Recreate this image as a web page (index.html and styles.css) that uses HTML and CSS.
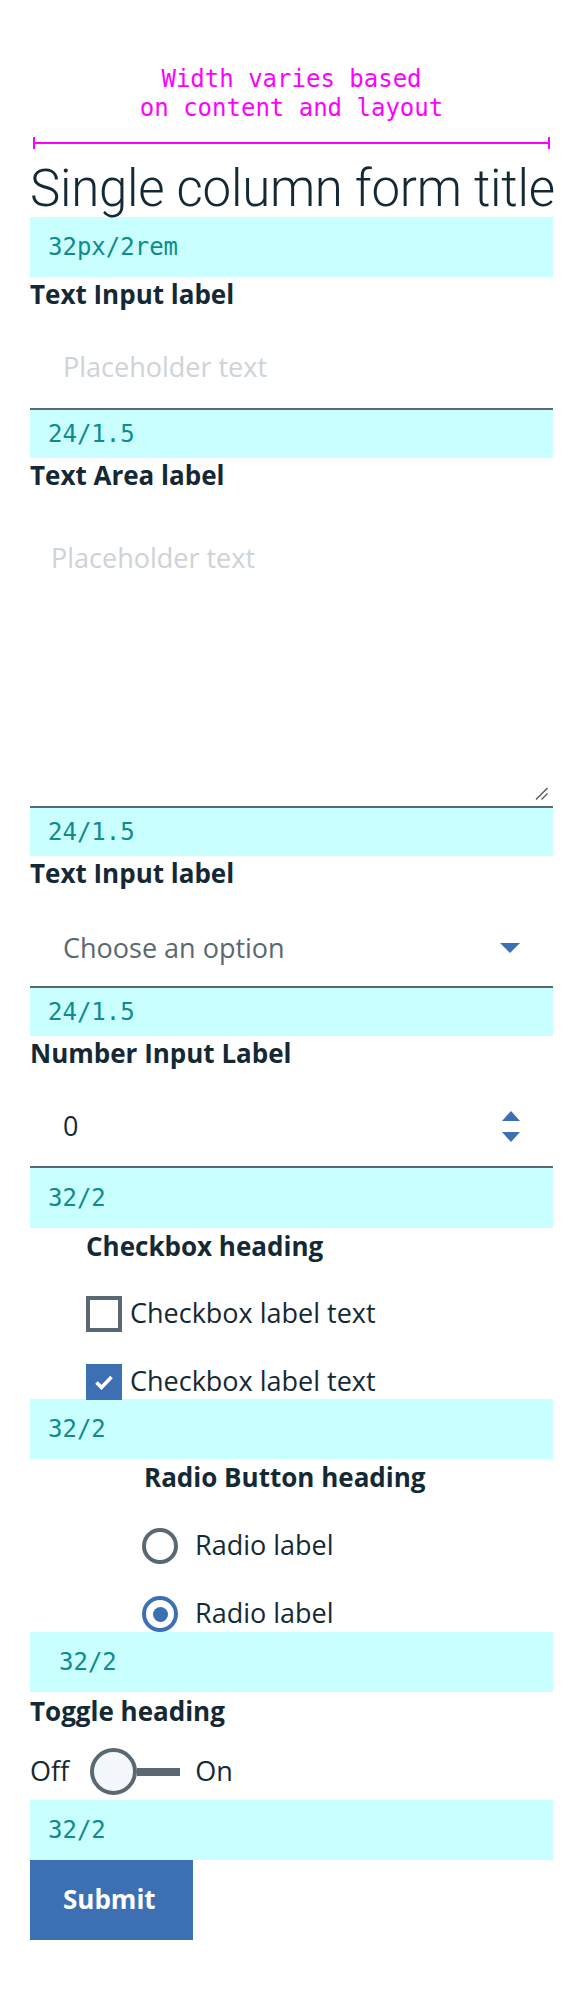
FILE: index.html
```html
<!DOCTYPE html>
<html lang="en">
<head>
<meta charset="utf-8">
<title>Single column form</title>
<link rel="stylesheet" href="styles.css">
</head>
<body>
<div class="page">
  <div class="note">Width varies based<br>on content and layout</div>
  <div class="measure"></div>
  <h1 class="title">Single column form title</h1>
  <div class="spacer s60"><span>32px/2rem</span></div>

  <div class="field">
    <div class="label">Text Input label</div>
    <div class="input"><span class="placeholder">Placeholder text</span></div>
  </div>
  <div class="spacer s48"><span>24/1.5</span></div>

  <div class="field">
    <div class="label">Text Area label</div>
    <div class="textarea">
      <span class="placeholder">Placeholder text</span>
      <svg class="grip" width="13" height="13" viewBox="0 0 13 13"><path d="M1 12.5 L12.5 1 M6.5 12.5 L12.5 6.5" stroke="#555" stroke-width="1.3" fill="none"/></svg>
    </div>
  </div>
  <div class="spacer s48"><span>24/1.5</span></div>

  <div class="field">
    <div class="label">Text Input label</div>
    <div class="input select">
      <span class="value muted">Choose an option</span>
      <svg class="caret" width="20" height="10" viewBox="0 0 20 10"><polygon points="0,0 20,0 10,10" fill="#3d70b2"/></svg>
    </div>
  </div>
  <div class="spacer s48"><span>24/1.5</span></div>

  <div class="field">
    <div class="label">Number Input Label</div>
    <div class="input number">
      <span class="value">0</span>
      <svg class="spin" width="18" height="31" viewBox="0 0 18 31"><polygon points="0,10 18,10 9,0" fill="#3d70b2"/><polygon points="0,21 18,21 9,31" fill="#3d70b2"/></svg>
    </div>
  </div>
  <div class="spacer s60"><span>32/2</span></div>

  <div class="group checks">
    <div class="label">Checkbox heading</div>
    <div class="options">
      <div class="option"><span class="box"></span><span class="opt-text">Checkbox label text</span></div>
      <div class="option"><span class="box checked"><svg width="36" height="36" viewBox="0 0 36 36"><path d="M10.5 18.5 L15.5 23.5 L25.5 13" stroke="#fff" stroke-width="3.6" fill="none"/></svg></span><span class="opt-text">Checkbox label text</span></div>
    </div>
  </div>
  <div class="spacer s60"><span>32/2</span></div>

  <div class="group radios">
    <div class="label">Radio Button heading</div>
    <div class="options">
      <div class="option"><span class="radio"></span><span class="opt-text">Radio label</span></div>
      <div class="option"><span class="radio selected"><span class="dot"></span></span><span class="opt-text">Radio label</span></div>
    </div>
  </div>
  <div class="spacer s60 shifted"><span>32/2</span></div>

  <div class="toggle-field">
    <div class="label toggle-label">Toggle heading</div>
    <div class="toggle">
      <span class="opt-text">Off</span>
      <span class="knob"></span>
      <span class="track"></span>
      <span class="opt-text on">On</span>
    </div>
  </div>
  <div class="spacer s60"><span>32/2</span></div>

  <div class="submit">Submit</div>
</div>
</body>
</html>
```
FILE: styles.css
```css
* { box-sizing: border-box; margin: 0; padding: 0; }

body {
  margin: 0;
  background: #ffffff;
  font-family: "Open Sans", Roboto, "Liberation Sans", sans-serif;
  color: #152935;
}

.page {
  width: 523px;
  margin-left: 30px;
}

.note {
  padding-top: 65px;
  font: 24px/29px "DejaVu Sans Mono", monospace;
  color: #ff00ff;
  text-align: center;
}

.measure {
  margin: 14px 3px 0;
  height: 12px;
  border-left: 2px solid #ff00ff;
  border-right: 2px solid #ff00ff;
  background: linear-gradient(#ff00ff, #ff00ff) center / 100% 2px no-repeat;
}

.title {
  margin-top: 11px;
  font-family: Roboto, "Liberation Sans", sans-serif;
  font-size: 51px;
  font-weight: 300;
  letter-spacing: -0.25px;
  line-height: 57px;
  white-space: nowrap;
  color: #152935;
}

.spacer {
  display: flex;
  align-items: center;
  padding-left: 18px;
  background: #c9fffe;
  font: 24px "DejaVu Sans Mono", monospace;
  color: #0f8b8d;
}
.s60 { height: 60px; }
.s48 { height: 48px; }
.shifted { padding-left: 29px; }

.label {
  height: 38px;
  font-size: 26px;
  font-weight: 700;
  line-height: 35px;
  white-space: nowrap;
}

.input {
  display: flex;
  align-items: center;
  justify-content: space-between;
  padding: 32px 33px 21px 33px;
  border-bottom: 2px solid #5a6872;
  font-size: 27px;
  line-height: 40px;
}
.placeholder { color: #cdd3d8; }
.muted { color: #5a6872; }

.select { padding-top: 34px; padding-bottom: 18px; }
.number { padding-top: 32px; padding-bottom: 20px; }

.caret, .spin { display: block; flex: none; }

.textarea {
  display: flex;
  flex-direction: column;
  height: 312px;
  padding: 42px 0 0 21px;
  border-bottom: 2px solid #5a6872;
  font-size: 27px;
  line-height: 40px;
}
.grip {
  display: block;
  margin-top: auto;
  margin-bottom: 6px;
  margin-right: 5px;
  align-self: flex-end;
}

.group .label { height: 40px; line-height: 37px; }
.checks { padding-left: 56px; margin-bottom: -1px; }
.radios { padding-left: 112px; }
.radios .label { padding-left: 2px; }
.checks .options { padding-top: 28px; }
.radios .options { padding-top: 29px; }

.options {
  display: flex;
  flex-direction: column;
  gap: 32px;
}

.option {
  display: flex;
  align-items: center;
  height: 36px;
}

.opt-text {
  padding-bottom: 2px;
  font-size: 27px;
  line-height: 36px;
  color: #152935;
}

.box {
  flex: none;
  width: 36px;
  height: 36px;
  margin-right: 8px;
  border: 4px solid #5a6872;
  background: #ffffff;
}
.box.checked {
  border: none;
  background: #3d70b2;
}
.box svg { display: block; }

.radio {
  flex: none;
  display: flex;
  align-items: center;
  justify-content: center;
  width: 36px;
  height: 36px;
  margin-right: 17px;
  border: 4px solid #5a6872;
  border-radius: 50%;
}
.radio.selected { border-color: #3d70b2; }
.dot {
  width: 15px;
  height: 15px;
  border-radius: 50%;
  background: #3d70b2;
}

.toggle-field .toggle-label { height: 42px; line-height: 39px; }

.toggle {
  display: flex;
  align-items: center;
  height: 47px;
  margin: 14px 0 5px;
}
.knob {
  flex: none;
  width: 47px;
  height: 47px;
  margin-left: 21px;
  border: 4px solid #5a6872;
  border-radius: 50%;
  background: #f4f7fb;
}
.track {
  flex: none;
  width: 43px;
  height: 8px;
  background: #5a6872;
}
.on { margin-left: 15px; }

.submit {
  width: 163px;
  height: 80px;
  display: flex;
  align-items: center;
  padding: 0 0 2px 33px;
  background: #3d70b2;
  color: #ffffff;
  font-size: 26px;
  font-weight: 700;
}
```
